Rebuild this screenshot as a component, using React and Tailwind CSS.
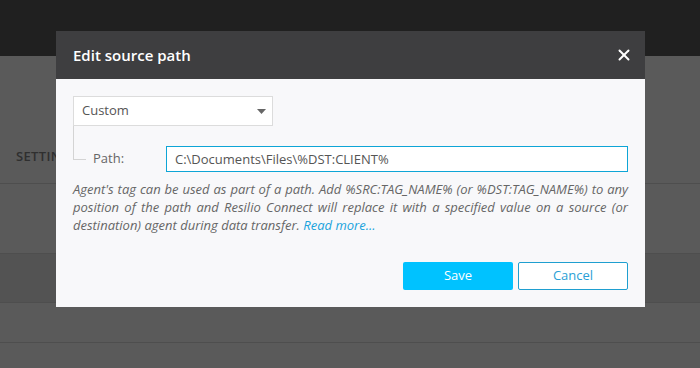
import { X } from "lucide-react";

function Background() {
  return (
    <div className="flex flex-col h-[368px]">
      <div className="h-[56px] bg-[#202020]"></div>
      <div className="flex-1 flex flex-col bg-[#5a5a5a]">
        <div className="h-[128px] border-b border-[#4e4e4e] flex items-end pb-[17px] pl-[16px]">
          <span className="text-[13px] font-semibold text-[#2f2f2f] tracking-wide">SETTINGS</span>
        </div>
        <div className="h-[70px] border-b border-[#4e4e4e]"></div>
        <div className="h-[49px] border-b border-[#4e4e4e] bg-[#535353]"></div>
        <div className="h-[40px] border-b border-[#4e4e4e]"></div>
        <div className="flex-1"></div>
      </div>
    </div>
  );
}

function Modal() {
  return (
    <div className="absolute left-[56px] top-[31px] w-[589px] bg-[#f8f8fa]">
      <div className="h-[48px] bg-[#3e3e40] flex items-center justify-between pl-[17px] pr-[12px]">
        <h1 className="text-white text-[15px] font-semibold">Edit source path</h1>
        <X size={18} strokeWidth={2.6} className="text-white" />
      </div>

      <div className="px-[17px] pt-[17px] pb-[17px]">
        <div className="w-[200px] h-[30px] border border-[#dcdcdc] bg-white flex items-center justify-between pl-[8px] pr-[6px]">
          <span className="text-[13px] text-[#555]">Custom</span>
          <svg width="9" height="5" viewBox="0 0 9 5">
            <path d="M0 0 L9 0 L4.5 5 Z" fill="#666" />
          </svg>
        </div>

        <div className="flex items-start">
          <div className="w-[13px] h-[34px] border-l border-b border-[#d4d4d4]"></div>
          <div className="flex items-center mt-[20px] flex-1">
            <span className="ml-[7px] w-[73px] text-[13px] text-[#666]">Path:</span>
            <input
              type="text"
              defaultValue="C:\Documents\Files\%DST:CLIENT%"
              className="flex-1 h-[26px] border border-[#0ea5d6] bg-white px-[8px] text-[13px] text-[#555] outline-none"
            />
          </div>
        </div>

        <p className="mt-[8px] text-[13px] leading-[18px] italic text-[#666] text-justify">
          Agent's tag can be used as part of a path. Add %SRC:TAG_NAME% (or %DST:TAG_NAME%) to any position of the path and Resilio Connect will replace it with a specified value on a source (or destination) agent during data transfer.{" "}
          <a className="text-[#1aa3dc]">Read more...</a>
        </p>

        <div className="flex justify-end gap-[5px] mt-[28px]">
          <button className="w-[110px] h-[28px] bg-[#00c2ff] rounded-[2px] text-white text-[13px] font-medium">
            Save
          </button>
          <button className="w-[110px] h-[28px] border border-[#1f9fd0] rounded-[2px] bg-white text-[#2a9fd6] text-[13px] font-medium">
            Cancel
          </button>
        </div>
      </div>
    </div>
  );
}

function App() {
  return (
    <div className="relative w-[700px] h-[368px] overflow-hidden font-['Open_Sans',sans-serif]">
      <Background />
      <Modal />
    </div>
  );
}

export default App;
